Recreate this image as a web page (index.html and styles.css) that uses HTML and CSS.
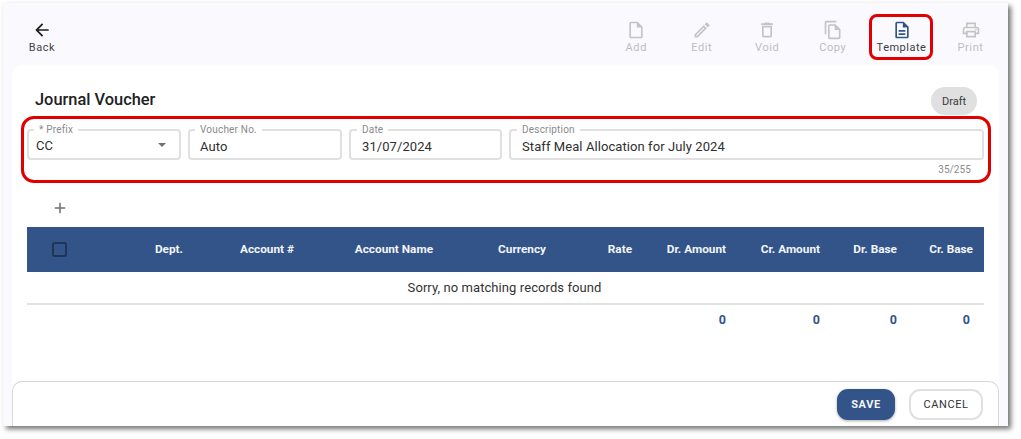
FILE: index.html
```html
<!DOCTYPE html>
<html lang="en">
<head>
<meta charset="utf-8">
<title>Journal Voucher</title>
<link rel="stylesheet" href="styles.css">
</head>
<body>
<div class="window">
  <header class="toolbar">
    <div class="tool tool-back">
      <svg class="ico" viewBox="0 0 24 24"><path fill="#1c1c1c" d="M20 11H7.830l5.590-5.590L12 4l-8 8 8 8 1.410-1.410L7.830 13H20z"/></svg>
      <span>Back</span>
    </div>
    <div class="tools">
      <div class="tool off">
        <svg class="ico" viewBox="0 0 24 24"><path d="M14 2H6c-1.100 0-2 .9-2 2v16c0 1.100.9 2 2 2h12c1.100 0 2-.9 2-2V8l-6-6zm4 18H6V4h7v5h5v11z"/></svg>
        <span>Add</span>
      </div>
      <div class="tool off">
        <svg class="ico" viewBox="0 0 24 24"><path d="M3 17.250V21h3.750L17.810 9.940l-3.750-3.750L3 17.250zM5.920 19H5v-.92l9.060-9.060.92.92L5.920 19zM20.710 7.040a1 1 0 0 0 0-1.410l-2.340-2.340a1 1 0 0 0-1.410 0l-1.830 1.830 3.750 3.750 1.830-1.830z"/></svg>
        <span>Edit</span>
      </div>
      <div class="tool off">
        <svg class="ico" viewBox="0 0 24 24"><path d="M16 9v10H8V9h8m-1.500-6h-5l-1 1H5v2h14V4h-3.500l-1-1zM18 7H6v12c0 1.100.9 2 2 2h8c1.100 0 2-.9 2-2V7z"/></svg>
        <span>Void</span>
      </div>
      <div class="tool off">
        <svg class="ico" viewBox="0 0 24 24"><path d="M16 1H4c-1.100 0-2 .9-2 2v14h2V3h12V1zm-1 4H8c-1.100 0-2 .9-2 2v14c0 1.100.9 2 2 2h11c1.100 0 2-.9 2-2V11l-6-6zM8 21V7h6v5h5v9H8z"/></svg>
        <span>Copy</span>
      </div>
      <div class="tool tool-template">
        <svg class="ico ico-blue" viewBox="0 0 24 24"><path d="M14 2H6c-1.100 0-2 .9-2 2v16c0 1.100.9 2 2 2h12c1.100 0 2-.9 2-2V8l-6-6zm4 18H6V4h7v5h5v11zM8 12h8v2H8zm0 4h8v2H8z"/></svg>
        <span>Template</span>
      </div>
      <div class="tool off tool-print">
        <svg class="ico" viewBox="0 0 24 24"><path d="M19 8h-1V3H6v5H5c-1.660 0-3 1.340-3 3v6h4v4h12v-4h4v-6c0-1.660-1.340-3-3-3zM8 5h8v3H8V5zm8 14H8v-4h8v4zm2-4v-2H6v2H4v-4c0-.55.45-1 1-1h14c.55 0 1 .45 1 1v4h-2z"/><circle cx="18" cy="11.500" r="1"/></svg>
        <span>Print</span>
      </div>
    </div>
    <div class="hl hl-template"></div>
  </header>

  <main class="card">
    <div class="title-row">
      <h1>Journal Voucher</h1>
      <span class="chip">Draft</span>
    </div>

    <section class="form">
      <div class="hl hl-form"></div>
      <div class="fields">
        <fieldset class="field f-prefix">
          <legend>* Prefix</legend>
          <span class="val val-prefix">CC</span>
          <span class="caret"></span>
        </fieldset>
        <fieldset class="field f-voucher">
          <legend>Voucher No.</legend>
          <span class="val">Auto</span>
        </fieldset>
        <fieldset class="field f-date">
          <legend>Date</legend>
          <span class="val">31/07/2024</span>
        </fieldset>
        <fieldset class="field f-desc">
          <legend>Description</legend>
          <span class="val">Staff Meal Allocation for July 2024</span>
        </fieldset>
      </div>
      <div class="counter">35/255</div>
    </section>

    <div class="add-row">
      <svg class="plus" viewBox="0 0 24 24"><path fill="#6f6f6f" d="M19 13h-6v6h-2v-6H5v-2h6V5h2v6h6z"/></svg>
    </div>

    <div class="table">
      <div class="row head">
        <div class="cell check-cell"><span class="check"></span></div>
        <div class="cell">Dept.</div>
        <div class="cell">Account #</div>
        <div class="cell">Account Name</div>
        <div class="cell">Currency</div>
        <div class="cell">Rate</div>
        <div class="cell">Dr. Amount</div>
        <div class="cell">Cr. Amount</div>
        <div class="cell">Dr. Base</div>
        <div class="cell">Cr. Base</div>
      </div>
      <div class="empty">Sorry, no matching records found</div>
      <div class="row totals">
        <div class="cell"></div>
        <div class="cell"></div>
        <div class="cell"></div>
        <div class="cell"></div>
        <div class="cell"></div>
        <div class="cell"></div>
        <div class="cell">0</div>
        <div class="cell">0</div>
        <div class="cell">0</div>
        <div class="cell last">0</div>
      </div>
    </div>

    <footer class="actions">
      <button class="btn btn-save" type="button">SAVE</button>
      <button class="btn btn-cancel" type="button">CANCEL</button>
    </footer>
  </main>
</div>
</body>
</html>
```
FILE: styles.css
```css
* { box-sizing: border-box; }
html, body { margin: 0; padding: 0; background: #fff; }
body {
  width: 1021px;
  height: 439px;
  overflow: hidden;
  padding: 3px 0 0 3px;
  font-family: Roboto, "Liberation Sans", sans-serif;
}
.window {
  width: 1005px;
  height: 423px;
  background: #fafafe;
  box-shadow: 3px 3px 5px rgba(0, 0, 0, 0.55);
  display: flex;
  flex-direction: column;
  padding: 0 9px;
}
.toolbar {
  position: relative;
  height: 62px;
  flex: none;
  display: flex;
  justify-content: space-between;
  color: #bdbdbd;
}
.tools { display: flex; margin-right: -4.500px; }
.tool {
  width: 65.500px;
  display: flex;
  flex-direction: column;
  align-items: center;
  padding-top: 17px;
  font-size: 11px;
  line-height: 13px;
  letter-spacing: 0.6px;
}
.tool-back { color: #444; width: 60px; font-size: 11px; }
.tool-template { color: #3d3d3d; width: 72px; letter-spacing: 0.5px; }
.tool-print { width: 66px; }
.ico { width: 20px; height: 20px; margin-bottom: 1px; fill: #c4c4c4; }
.ico-blue { fill: #325488; }
.hl {
  position: absolute;
  border: 3px solid #e00000;
  pointer-events: none;
}
.hl-template { left: 857px; top: 11px; width: 64px; height: 46px; border-radius: 8px; }
.card {
  position: relative;
  flex: 1;
  min-height: 0;
  background: #fff;
  border-radius: 10px 10px 0 0;
  padding: 0 15px;
  display: flex;
  flex-direction: column;
}
.title-row {
  height: 51px;
  flex: none;
  display: flex;
  justify-content: space-between;
  align-items: flex-start;
}
h1 {
  margin: 25px 0 0 8px;
  font-size: 16.400px;
  line-height: 19px;
  font-weight: 500;
  color: #212121;
}
.chip {
  margin: 22px 7px 0 0;
  height: 28px;
  width: 46px;
  border-radius: 14px;
  background: #e0e0e0;
  color: #3a3a3a;
  font-size: 11px;
  display: flex;
  align-items: center;
  justify-content: center;
}
.form { position: relative; height: 67px; flex: none; }
.hl-form { left: -6px; top: 0; width: 970px; height: 67px; border-radius: 13px; }
.fields { display: flex; gap: 7px; padding-top: 8px; }
.field {
  position: relative;
  margin: 0;
  padding: 0 7px;
  height: 36px;
  min-width: 0;
  border: 2px solid #e0e0e0;
  border-radius: 4px;
  display: flex;
  align-items: center;
}
.field legend {
  margin-left: -5px;
  padding: 0 5px;
  font-size: 10px;
  line-height: 11px;
  letter-spacing: 0.2px;
  color: #8a8a8a;
}
.f-prefix { width: 154px; }
.f-prefix legend { margin-left: -2px; }
.f-voucher { width: 154px; padding-left: 10px; }
.f-date { width: 153px; padding-left: 11px; }
.f-desc { width: 475px; padding-left: 11px; }
.val {
  font-size: 13px;
  line-height: 16px;
  letter-spacing: 0.08px;
  color: #2f2f2f;
  position: relative;
  top: 0;
}
.val-prefix { top: -1px; }
.caret {
  position: absolute;
  right: 13px;
  top: 8px;
  border-left: 4px solid transparent;
  border-right: 4px solid transparent;
  border-top: 4px solid #707070;
}
.counter {
  font-size: 10px;
  line-height: 12px;
  letter-spacing: 0.1px;
  color: #8a8a8a;
  text-align: right;
  padding: 4px 13px 0 0;
}
.add-row { height: 44px; flex: none; display: flex; align-items: center; padding: 6px 0 0 24px; }
.plus { width: 18px; height: 18px; }
.table { flex: none; width: 957px; }
.row {
  display: grid;
  grid-template-columns: 60px 107px 111px 139px 113px 86px 94px 94px 77px 76px;
  align-items: center;
}
.head {
  height: 45px;
  background: #325488;
  color: #f2f4f8;
  font-size: 11.800px;
  font-weight: 700;
  padding-bottom: 1px;
}
.cell { text-align: right; padding-right: 11px; }
.check-cell { text-align: left; padding-left: 25px; display: flex; }
.check {
  width: 15px;
  height: 15px;
  border: 2px solid #1f3558;
  border-radius: 2.500px;
}
.empty {
  height: 33px;
  border-bottom: 2px solid #e2e2e2;
  font-size: 13px;
  letter-spacing: 0.08px;
  color: #333;
  text-align: center;
  line-height: 31px;
  padding-right: 2px;
}
.totals {
  height: 28px;
  font-size: 12.500px;
  font-weight: 700;
  color: #325488;
}
.totals .last { padding-right: 14px; }
.actions {
  position: absolute;
  left: 0;
  right: 0;
  bottom: 0;
  height: 45px;
  background: #fff;
  border: 1px solid #d8d8d8;
  border-bottom: none;
  border-radius: 10px 10px 0 0;
  display: flex;
  justify-content: flex-end;
  align-items: center;
  gap: 14px;
  padding: 0 15px 0 0;
}
.btn {
  height: 31px;
  border-radius: 11px;
  font-family: inherit;
  font-size: 11px;
  letter-spacing: 0.6px;
  padding: 0;
}
.btn-save {
  width: 58px;
  border: none;
  background: #325488;
  color: #f2f4f8;
  font-weight: 700;
  box-shadow: 0 1px 3px rgba(0, 0, 0, 0.35);
}
.btn-cancel {
  width: 74px;
  background: #fff;
  border: 2px solid #e0e0e0;
  color: #333;
  font-weight: 400;
}
```
